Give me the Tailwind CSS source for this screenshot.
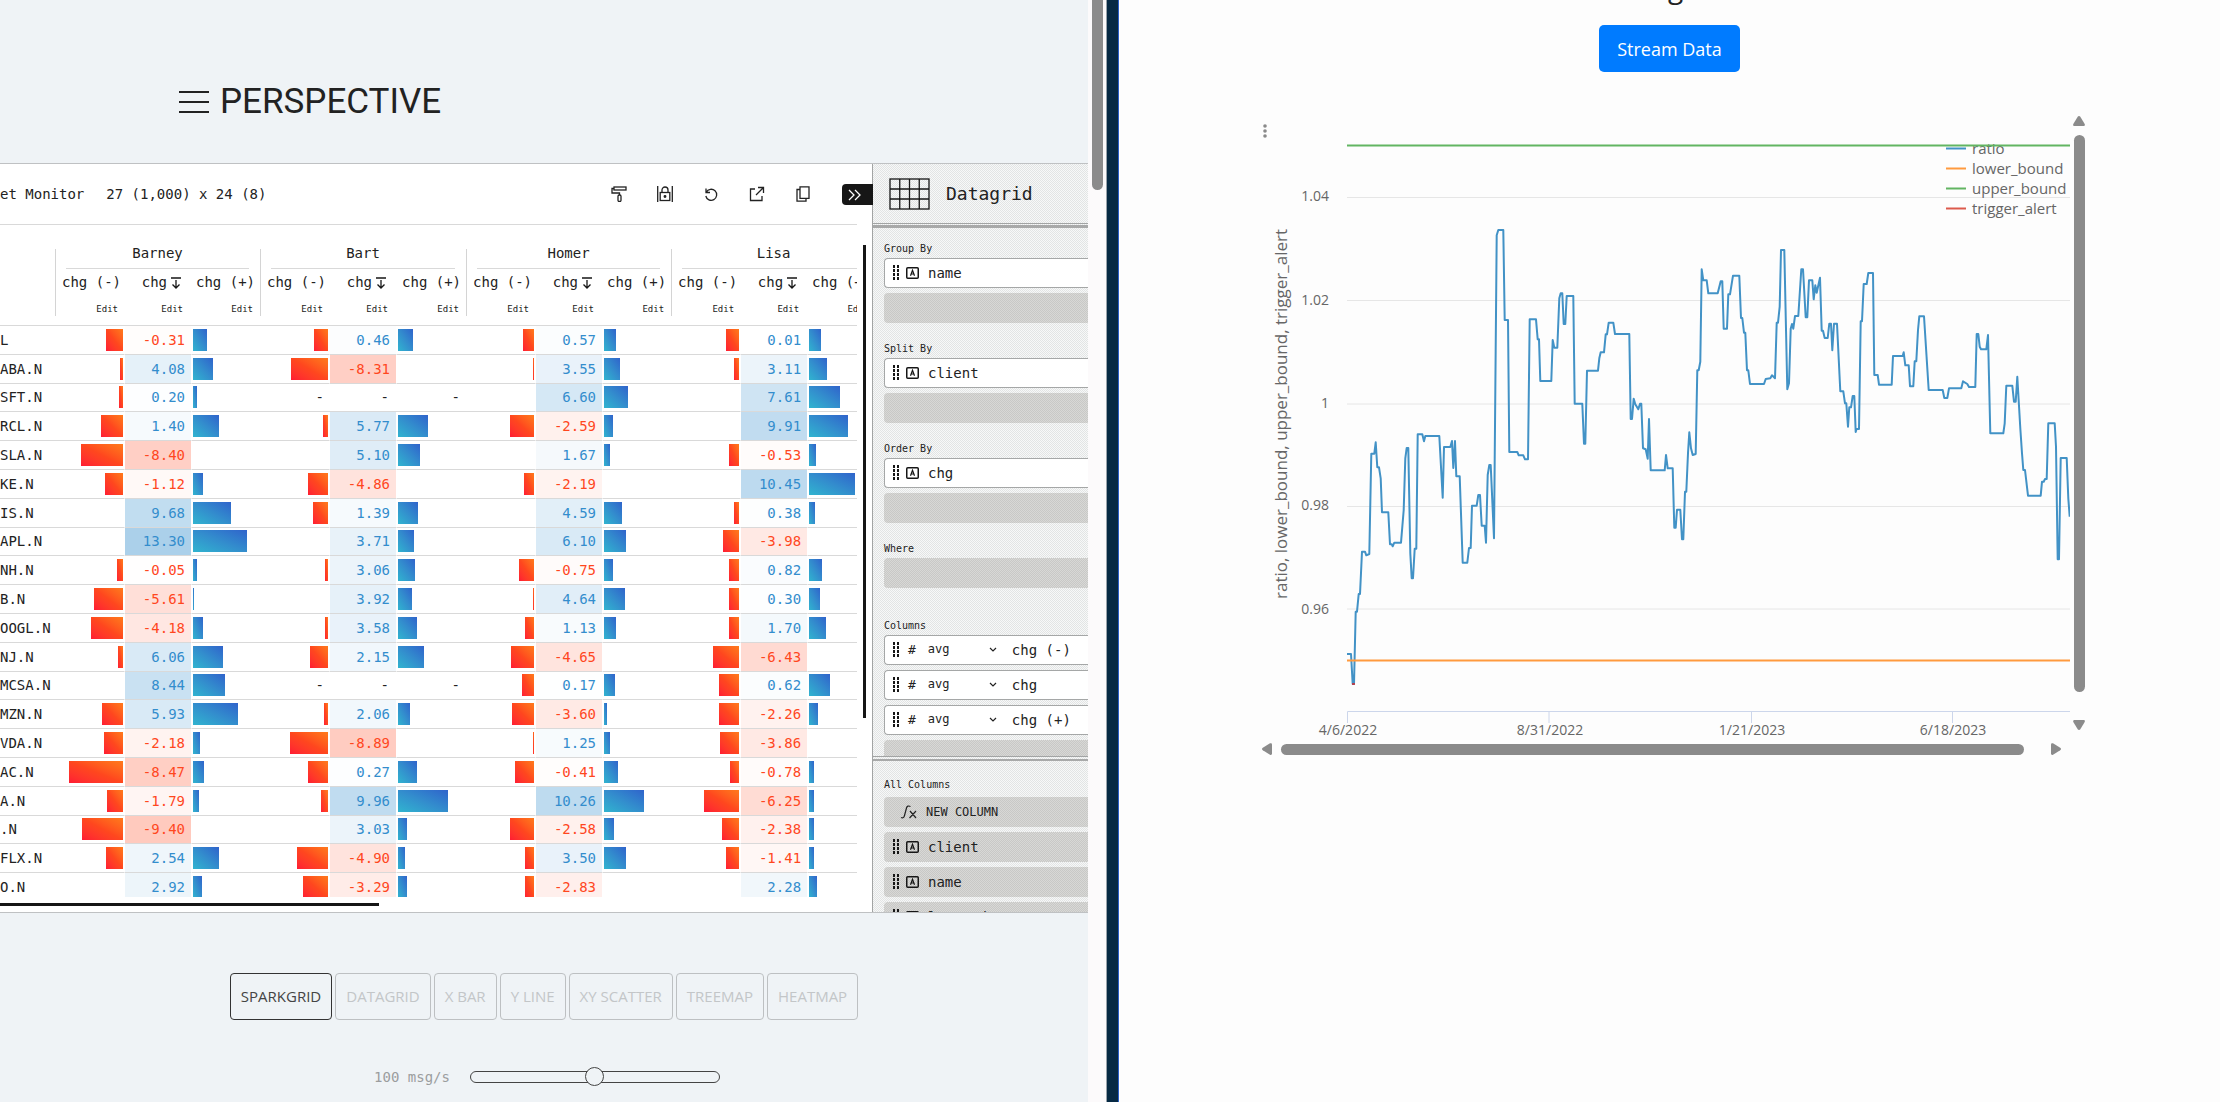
<!DOCTYPE html>
<html lang="en">
<head>
<meta charset="utf-8">
<title>Perspective</title>
<script src="https://cdn.jsdelivr.net/npm/@tailwindcss/browser@4"></script>
</head>
<body class="h-screen overflow-hidden bg-[#fdfdfd]">
<svg class="hidden">
  <symbol id="grip" viewBox="0 0 6 16"><path fill="#161616" d="M0 0h2v3H0zM4 0h2v3H4zM0 4h2v3H0zM4 4h2v3H4zM0 8h2v3H0zM4 8h2v3H4zM0 12h2v3H0zM4 12h2v3H4z"/></symbol>
  <symbol id="str" viewBox="0 0 13 12"><rect x=".75" y=".75" width="11.500" height="10.500" rx="1" fill="none" stroke="#161616" stroke-width="1.500"/><path d="M4.500 8.800 6.500 3.300 8.500 8.800M5.200 7h2.600" fill="none" stroke="#161616" stroke-width="1.200"/></symbol>
</svg>
<div class="grid h-full grid-cols-[1106fr_13px_1101fr]">

  <!-- Perspective demo window -->
  <section class="flex min-w-0 overflow-hidden font-['DejaVu_Sans_Mono',monospace] text-[#222]">
    <div class="flex min-w-0 flex-1 flex-col bg-[#eff3f6]">
      <header class="flex h-[163px] shrink-0 items-center gap-2.5 pt-10 pl-[179px]">
        <button aria-label="Menu" class="mt-px"><svg class="h-6 w-[31px]" viewBox="0 0 31 24"><path d="M0 2h30M0 12h30M0 22h30" stroke="#222" stroke-width="2"/></svg></button>
        <h1 class="font-[Roboto,sans-serif] text-[35px] leading-10 text-[#222]">PERSPECTIVE</h1>
      </header>

      <div class="flex h-[750px] shrink-0 overflow-hidden border-y border-[#bfc1c3] bg-white">
        <div class="flex min-w-0 flex-1 flex-col">
          <div class="relative mr-[15px] flex h-[61px] shrink-0 items-center border-b border-[#d9d9d9] pr-[46px] text-sm">
            <span>et Monitor</span>
            <span class="ml-[22px]">27 (1,000) x 24 (8)</span>
            <div class="ml-auto flex items-center gap-[30px]">
              <button aria-label="Theme"><svg class="size-4" viewBox="0 0 16 16" fill="none" stroke="#222" stroke-width="1.300"><rect x="3" y="1" width="12" height="3"/><path d="M3 2.500H1v4.500h7.500v2"/><rect x="7" y="9" width="3" height="6.500" rx="1.200"/></svg></button>
              <button aria-label="Lock"><svg class="size-4" viewBox="0 0 16 16" fill="none" stroke="#222" stroke-width="1.300"><path d="M.7 0v16M15.300 0v16"/><rect x="3.200" y="6.500" width="9.600" height="8"/><path d="M5 6.500V4a3 3 0 0 1 6 0v2.500"/><circle cx="8" cy="10.500" r=".8" fill="#222"/></svg></button>
              <button aria-label="Reset"><svg class="size-4" viewBox="0 0 16 16" fill="none" stroke="#222" stroke-width="1.300"><path d="M3 2.500v4h4M3.300 6.200A5.500 5.500 0 1 1 2.800 10"/></svg></button>
              <button aria-label="Export"><svg class="size-4" viewBox="0 0 16 16" fill="none" stroke="#222" stroke-width="1.300"><path d="M6 3H1.500v11.500H13V10M9 1.500h5.500V7M14.500 1.500 7 9"/></svg></button>
              <button aria-label="Copy"><svg class="size-4" viewBox="0 0 16 16" fill="none" stroke="#222" stroke-width="1.300"><path d="M5 .8h9v11.500H5zM5 3.500H2v11.700h9v-3"/></svg></button>
            </div>
            <button aria-label="Close settings" class="absolute top-5 -right-4 z-10 flex h-[21px] w-[31px] items-center rounded-l bg-[#161616] pl-1.5"><svg class="h-3 w-[13px]" viewBox="0 0 13 12" fill="none" stroke="#fff" stroke-width="1.300"><path d="m1 1 5 5-5 5M7 1l5 5-5 5"/></svg></button>
          </div>

          <div class="flex min-h-0 flex-1">
            <div class="mb-[15px] min-w-0 flex-1 overflow-hidden pt-[19px]">
              <table class="h-[658px] w-[877px] table-fixed border-separate border-spacing-0 text-sm leading-5">
                <colgroup>
                  <col class="w-14">
                  <col class="w-[68px]"><col class="w-[68px]"><col class="w-[69px]">
                  <col class="w-[68px]"><col class="w-[68px]"><col class="w-[70px]">
                  <col class="w-[68px]"><col class="w-[68px]"><col class="w-[69px]">
                  <col class="w-[68px]"><col class="w-[68px]"><col class="w-[69px]">
                </colgroup>
                <thead id="head"></thead>
                <tbody id="rows"></tbody>
              </table>
            </div>
            <div class="w-[15px] shrink-0 pt-5 pl-1.5"><div class="h-[473px] w-[3px] bg-[#161616]"></div></div>
          </div>
          <div class="-mt-[9px] mb-[6px] h-[3px] w-[379px] shrink-0 bg-[#161616]"></div>
        </div>

        <!-- Settings panel -->
        <aside class="flex w-[216px] shrink-0 flex-col overflow-hidden border-l border-[#a2a4a4] bg-[repeating-conic-gradient(#e2e4e4_0_25%,#f7f8f8_0_50%)] bg-[length:2px_2px]">
          <div class="flex h-[60px] shrink-0 items-center gap-4 border-b border-[#a2a4a4] pl-4">
            <svg class="h-8 w-[41px]" viewBox="0 0 41 32" fill="none" stroke="#161616" stroke-width="1.300"><rect x="1" y="1" width="39" height="30"/><path d="M10.750 1v30M20.500 1v30M30.250 1v30M1 11h39M1 21h39"/></svg>
            <h2 class="text-lg">Datagrid</h2>
          </div>
          <div class="mt-px h-[3px] shrink-0 bg-[#a8a9a9]"></div>
          <div class="flex h-[529px] shrink-0 flex-col overflow-hidden border-b border-[#a2a4a4] pt-[13px] pl-[11px]" id="config"></div>
          <div class="mt-[2px] h-[2px] shrink-0 bg-[#a8a9a9]"></div>
          <div class="flex flex-col gap-[5px] pt-[17px] pl-[11px]">
            <h3 class="text-[10px] leading-[14px]">All Columns</h3>
            <button class="flex h-[30px] shrink-0 items-center gap-2 rounded-l-sm bg-[repeating-conic-gradient(#c8c8c6_0_25%,#d8d8d6_0_50%)] bg-[length:2px_2px] pl-4 text-[12px]"><svg class="h-3.5 w-[18px]" viewBox="0 0 18 14" fill="none" stroke="#222" stroke-width="1.200"><path d="M1 12.500c2 1 3 0 3.500-2L6.500 3c.5-2 2-2.500 4-1.500M10 6l6 7M16 6l-6.500 7"/></svg>NEW COLUMN</button>
            <div id="all" class="flex flex-col gap-[5px]"></div>
          </div>
        </aside>
      </div>

      <nav class="mt-[60px] flex shrink-0 justify-center gap-[3px] font-['Open_Sans',sans-serif] text-[15px] text-[#c3c6c8]">
        <button class="h-[47px] rounded-sm border border-[#333] px-2.5 text-[#444]">SPARKGRID</button>
        <button class="h-[47px] rounded-sm border border-[#bdc0c2] px-2.5">DATAGRID</button>
        <button class="h-[47px] rounded-sm border border-[#bdc0c2] px-2.5">X BAR</button>
        <button class="h-[47px] rounded-sm border border-[#bdc0c2] px-2.5">Y LINE</button>
        <button class="h-[47px] rounded-sm border border-[#bdc0c2] px-2.5">XY SCATTER</button>
        <button class="h-[47px] rounded-sm border border-[#bdc0c2] px-2.5">TREEMAP</button>
        <button class="h-[47px] rounded-sm border border-[#bdc0c2] px-2.5">HEATMAP</button>
      </nav>
      <div class="mt-[47px] flex shrink-0 items-center justify-center gap-5 pl-1.5 text-sm text-[#9b9d9e]">
        <label for="rate">100 msg/s</label>
        <input id="rate" type="range" value="50" class="h-5 w-[250px] appearance-none bg-transparent [&::-webkit-slider-runnable-track]:h-3 [&::-webkit-slider-runnable-track]:rounded-full [&::-webkit-slider-runnable-track]:border [&::-webkit-slider-runnable-track]:border-[#444] [&::-webkit-slider-thumb]:-mt-[5px] [&::-webkit-slider-thumb]:size-[19px] [&::-webkit-slider-thumb]:appearance-none [&::-webkit-slider-thumb]:rounded-full [&::-webkit-slider-thumb]:border [&::-webkit-slider-thumb]:border-[#444] [&::-webkit-slider-thumb]:bg-[#eff3f6]">
      </div>
    </div>
    <div class="w-[18px] shrink-0 bg-[#fcfafb] px-1"><div class="h-[190px] w-[11px] rounded-b-full bg-[#8b8b8b]"></div></div>
  </section>

  <div class="border-r border-l border-r-[#2a5fc8] border-l-[#98a2aa] bg-[#062943]"></div>

  <!-- Streaming chart window -->
  <section class="min-w-0 overflow-hidden font-['Open_Sans',sans-serif]">
    <h2 class="-mt-[31px] mb-5 pl-3 text-center text-[28px] leading-9 text-[#222]">g</h2>
    <div class="flex justify-center">
      <button class="h-[47px] rounded-[5px] bg-[#007bff] px-[18px] text-lg text-white">Stream Data</button>
    </div>
    <div class="relative mx-auto mt-[43px] grid max-w-[831px] grid-cols-[1fr_12px] gap-[3px]">
      <button aria-label="Chart options" class="absolute top-2 left-2"><svg class="h-4 w-1.5" viewBox="0 0 6 16" fill="#8a8a8a"><circle cx="3" cy="3" r="1.800"/><circle cx="3" cy="8" r="1.800"/><circle cx="3" cy="13" r="1.800"/></svg></button>
      <svg class="h-auto w-full" viewBox="1254 115 816 625" fill="none">
        <g stroke="#e6e6e6"><path d="M1347 197.500h723M1347 300.500h723M1347 404h723M1347 506.500h723M1347 609h723"/></g>
        <path d="M1347.500 723v-11.500H2070M1549 711v12M1751.500 711v12M1952.500 711v12" stroke="#ccd6eb"/>
        <g fill="#666" font-size="14" text-anchor="end">
          <text x="1329" y="201">1.04</text><text x="1329" y="305">1.02</text><text x="1329" y="408">1</text><text x="1329" y="510">0.98</text><text x="1329" y="614">0.96</text>
        </g>
        <g fill="#666" font-size="14" text-anchor="middle">
          <text x="1348" y="735">4/6/2022</text><text x="1550" y="735">8/31/2022</text><text x="1752" y="735">1/21/2023</text><text x="1953" y="735">6/18/2023</text>
        </g>
        <text transform="translate(1287 414) rotate(-90)" text-anchor="middle" font-size="17" fill="#666">ratio, lower_bound, upper_bound, trigger_alert</text>
        <polyline stroke="#4292c6" stroke-width="2" stroke-linejoin="round" points="1347,654 1351,654 1352.7,684 1354,684 1355.7,611.7 1357,611.7 1358.7,594 1360,594 1362,551.7 1365,551.7 1366.3,555.3 1369.3,554 1371.3,453.7 1374.3,453.7 1375.7,442.3 1377.3,467.3 1379,467.3 1380.7,478.3 1382,512.3 1388.3,512.3 1390,544.3 1391.7,544.3 1392.7,546.3 1394.3,542.7 1401,542.7 1403.7,510 1405.3,458.3 1406.7,448 1408.3,448 1410.3,553.3 1411.7,578.3 1413,578.3 1414.7,548.7 1416.3,548.7 1417.7,434.3 1422.3,434.3 1424,441.3 1425.3,436 1439.3,436 1442.7,497.7 1444,447 1450.3,447 1452,441 1453.3,468 1455,441 1456.3,476.3 1459.7,476.3 1462.7,562.7 1467.3,562.7 1469,548 1470.7,548 1472,505.7 1476.7,505.7 1478.3,495 1480,495 1481.7,525.7 1484.7,525.7 1486,542.7 1487.7,475 1489.3,465 1490.7,465 1494,538.3 1496.7,235.3 1498.3,230 1503.3,230 1504.7,320 1508,320 1509.3,452 1517.3,452 1518.7,455.3 1523.3,455.3 1525,459.3 1528,459.3 1529.7,319.3 1536,319.3 1537.7,339.3 1539,339.3 1540.3,381 1551.3,381 1552.7,340 1554.3,347.7 1557.3,347.7 1559.3,298.3 1560.7,293.3 1562.3,293.3 1563.7,324 1565.3,324 1566.7,296 1573.3,296 1574.7,403.7 1582.3,403.7 1584,443.7 1585.3,443.7 1587,370.7 1598,370.7 1599.3,358.3 1600.7,352.3 1604,352.3 1605.7,334.3 1607,334.3 1608.7,322.7 1613.3,322.7 1615,334 1629.3,334 1630.7,419 1632,419 1633.7,398.7 1635.3,404.3 1638.3,409.3 1640,403.7 1641.3,403.7 1643,448.3 1645.7,449.3 1647.7,458.7 1649,419 1650.7,470.3 1664.7,470.3 1666,455 1667.7,468.3 1672.7,468.3 1674.3,527.7 1675.7,527.7 1677,509.7 1680.3,509.7 1682,539.3 1683.3,539.3 1685,491.7 1686.3,491.7 1688,453.3 1689.3,432.3 1691,448.3 1692.7,455 1695.7,454 1697.3,370.3 1698.7,370.3 1700.3,361.7 1701.7,269.3 1703.3,280.3 1706.7,280.3 1708.3,293.3 1717.7,293.3 1720.7,281.3 1722.3,281.3 1723.7,328.7 1727,328.7 1728.3,294.3 1730,294.3 1733,275.7 1739.3,275.7 1741,318 1742.3,318 1744,332.7 1745.3,332.7 1747,370.3 1748.3,370.3 1750,384 1764,384 1765.7,379 1770.3,378.3 1772,375.3 1775,378.3 1776.7,322.7 1778,322.7 1779.7,306.7 1781,250 1784.3,250 1787.3,389.3 1789,383.3 1790.7,328.7 1792,324 1793.3,328.7 1795,316 1798.3,316 1801.3,269.3 1803,269.3 1805.7,317.3 1807.3,317.3 1809,280.3 1812.3,280.3 1813.7,299.3 1815.3,285.3 1816.7,292.7 1820,277.7 1821.7,330.7 1823,330.7 1824.7,338 1827.7,338 1829.3,323.7 1831,323.7 1832.3,350.3 1834,323.7 1837,323.7 1840.3,391.3 1843.3,391.3 1845,403.3 1846.3,403.3 1848,426.7 1849.3,407.3 1851,407.3 1852.7,396 1854.3,396 1855.7,432 1856.5,429 1859,429 1860.7,321.3 1862,321.3 1863.7,284 1866.7,284 1868.3,273 1873,273 1874.3,375 1877.7,375 1879,384.7 1891.7,384.7 1893,356 1902.7,356 1903.7,352.3 1905.3,365.3 1908.7,365.3 1910,386.3 1913.3,386.3 1914.7,361.3 1916.3,361.3 1918,330 1919.3,316.3 1924,316.3 1928.7,390 1942.7,390 1944.3,398 1947.3,398 1949,388.3 1961.3,388.3 1963,381.3 1967.3,384 1969,387 1975.3,387 1976.7,334 1978.3,334 1979.7,346.7 1981,349.3 1986.3,349.3 1988,335 1990.3,433.3 2003.3,433.3 2004.7,423.3 2006.3,385.7 2012.3,385.7 2014,401.7 2015.7,401.7 2017.3,376.7 2020.3,428.3 2022,453.3 2023.3,470 2025,470 2028,495.7 2040.7,495.7 2042,481.7 2043.7,481.7 2045,479 2046.7,479 2048.3,423.3 2054.7,423.3 2056,446.7 2057.7,559.3 2059,559.3 2060.7,458 2066.7,458 2068.3,498.3 2069.7,516.7"/>
        <path d="M1352 684h3" stroke="#d62728" stroke-width="1.500"/>
        <path d="M1347 660.500h723" stroke="#ff9a3e" stroke-width="2"/>
        <g font-size="15" fill="#666">
          <text x="1972" y="154">ratio</text><text x="1972" y="174">lower_bound</text><text x="1972" y="194">upper_bound</text><text x="1972" y="214">trigger_alert</text>
        </g>
        <g stroke-width="2"><path d="M1946 148.500h20" stroke="#4292c6"/><path d="M1946 168.500h20" stroke="#ff9a3e"/><path d="M1946 188.500h20" stroke="#62b562"/><path d="M1946 208.500h20" stroke="#dc5a4c"/><path d="M1347 145.500h723" stroke="#62b562"/></g>
      </svg>
      <div class="flex flex-col items-center pt-px pb-2.5">
        <svg class="h-[10px] w-3" viewBox="0 0 12 10" fill="#8b8b8b"><path d="M6 0c.6 0 1 .4 1.300.8L11.700 8c.5 1-.2 2-1 2H1.300c-.9 0-1.500-1-1-2L4.700.8C5 .4 5.400 0 6 0z"/></svg>
        <div class="mt-[9px] mb-7 w-[11px] flex-1 rounded-full bg-[#8b8b8b]"></div>
        <svg class="h-[10px] w-3" viewBox="0 0 12 10" fill="#8b8b8b"><path d="M6 10c-.6 0-1-.4-1.300-.8L.3 2c-.5-1 .2-2 1-2h9.400c.9 0 1.500 1 1 2L7.300 9.200C7 9.600 6.600 10 6 10z"/></svg>
      </div>
      <div class="flex items-center pr-[9px] pl-2">
        <svg class="h-3 w-[10px]" viewBox="0 0 10 12" fill="#8b8b8b"><path d="M0 6c0-.6.400-1 .8-1.300L8 .3c1-.5 2 .2 2 1v9.400c0 .9-1 1.500-2 1L.8 7.300C.4 7 0 6.600 0 6z"/></svg>
        <div class="mr-[27px] ml-[9px] h-[11px] flex-1 rounded-full bg-[#8b8b8b]"></div>
        <svg class="h-3 w-[10px]" viewBox="0 0 10 12" fill="#8b8b8b"><path d="M10 6c0-.6-.4-1-.8-1.300L2 .3C1-.2 0 .5 0 1.300v9.400c0 .9 1 1.500 2 1l7.200-4.400c.4-.3.800-.7.800-1.300z"/></svg>
      </div>
    </div>
  </section>
</div>

<script>
const clients = ['Barney', 'Bart', 'Homer', 'Lisa'];
// Each client: [negative bar px, average change, positive bar px]; null means no trades.
const data = [
  ['L', [17,-0.31,14],[14,0.46,15],[11,0.57,12],[13,0.01,12]],
  ['ABA.N', [3,4.08,20],[37,-8.31,0],[1,3.55,16],[5,3.11,18]],
  ['SFT.N', [4,0.20,4],null,[0,6.60,24],[0,7.61,31]],
  ['RCL.N', [22,1.40,26],[5,5.77,30],[24,-2.59,9],[0,9.91,39]],
  ['SLA.N', [42,-8.40,0],[0,5.10,22],[0,1.67,6],[10,-0.53,7]],
  ['KE.N', [18,-1.12,10],[20,-4.86,0],[10,-2.19,0],[0,10.45,46]],
  ['IS.N', [0,9.68,38],[15,1.39,20],[0,4.59,18],[5,0.38,6]],
  ['APL.N', [0,13.30,54],[0,3.71,16],[0,6.10,22],[16,-3.98,0]],
  ['NH.N', [6,-0.05,4],[3,3.06,17],[15,-0.75,9],[10,0.82,13]],
  ['B.N', [29,-5.61,1],[0,3.92,14],[1,4.64,21],[10,0.30,11]],
  ['OOGL.N', [32,-4.18,10],[3,3.58,19],[9,1.13,12],[10,1.70,17]],
  ['NJ.N', [5,6.06,30],[18,2.15,26],[23,-4.65,0],[26,-6.43,0]],
  ['MCSA.N', [0,8.44,32],null,[12,0.17,11],[20,0.62,21]],
  ['MZN.N', [21,5.93,45],[4,2.06,12],[22,-3.60,3],[20,-2.26,9]],
  ['VDA.N', [19,-2.18,7],[38,-8.89,0],[1,1.25,6],[19,-3.86,0]],
  ['AC.N', [54,-8.47,11],[20,0.27,19],[19,-0.41,14],[9,-0.78,5]],
  ['A.N', [16,-1.79,6],[7,9.96,50],[0,10.26,40],[35,-6.25,5]],
  ['.N', [41,-9.40,0],[0,3.03,9],[24,-2.58,10],[17,-2.38,5]],
  ['FLX.N', [17,2.54,26],[31,-4.90,7],[9,3.50,22],[13,-1.41,5]],
  ['O.N', [0,2.92,9],[25,-3.29,9],[9,-2.83,0],[0,2.28,8]],
];
const sep = "before:absolute before:-left-px before:w-px before:bg-[#d4d4d4] before:content-['']";
const sortIcon = '<svg class="ml-1 inline h-3 w-[10px]" viewBox="0 0 10 12" fill="none" stroke="#161616" stroke-width="1.300"><path d="M0 1h10M5 3v8M1.500 7.500 5 11l3.500-3.500"/></svg>';
document.getElementById('head').innerHTML =
  '<tr class="h-[25px]"><th></th>' + clients.map(c => `<th colspan="3" class="relative px-0 align-top font-normal before:top-[5px] before:bottom-0 ${sep}"><div class="mr-3 ml-[10px] h-[25px] border-b border-[#d9d9d9] pb-1.5 leading-[18px]">${c}</div></th>`).join('') + '</tr>' +
  '<tr class="h-[27px]"><th></th>' + clients.map(() => `<th class="relative pr-[3px] pb-px text-right font-normal whitespace-nowrap before:top-0 before:bottom-0 ${sep}">chg (-)</th><th class="pr-[11px] pb-px text-right font-normal whitespace-nowrap">chg${sortIcon}</th><th class="pr-[6px] pb-px text-right font-normal whitespace-nowrap">chg (+)</th>`).join('') + '</tr>' +
  '<tr class="h-[30px] text-[9px]"><th class="border-b border-[#d9d9d9]"></th>' + clients.map(() => `<th class="relative border-b border-[#d9d9d9] pr-[6px] pb-[3px] text-right font-normal before:top-0 before:bottom-[9px] ${sep}">Edit</th><th class="border-b border-[#d9d9d9] pr-[9px] pb-[3px] text-right font-normal">Edit</th><th class="border-b border-[#d9d9d9] pr-2 pb-[3px] text-right font-normal">Edit</th>`).join('') + '</tr>';

const td = 'border-b border-[#d9d9d9] ';
const cell = g => {
  if (!g) return `<td class="${td} pr-[5px] text-right">-</td><td class="${td} pr-2 text-right">-</td><td class="${td} pr-[7px] text-right">-</td>`;
  const [n, v, p] = g;
  const a = (Math.abs(v) * 0.031).toFixed(3);
  const bg = v < 0 ? `rgba(255,71,30,${a})` : `rgba(51,141,205,${a})`;
  return `<td class="${td} pr-px"><div class="ml-auto h-[22px] bg-linear-to-tr from-[#ff1a33] via-[#ff471e] to-[#ff7a1c]" style="width:${n}px"></div></td>` +
    `<td class="${td} border-x border-x-white bg-clip-padding pr-[6px] text-right ${v < 0 ? 'text-[#ff471e]' : 'text-[#338dcd]'}" style="background-color:${bg}">${v.toFixed(2)}</td>` +
    `<td class="${td} pl-px"><div class="h-[22px] bg-linear-to-tr from-[#31b4cf] via-[#338dcd] to-[#3063cb]" style="width:${p}px"></div></td>`;
};
document.getElementById('rows').innerHTML = data.map(([name, ...gs]) =>
  `<tr class="h-7"><th class="${td} text-left font-normal whitespace-nowrap">${name}</th>${gs.map(cell).join('')}</tr>`).join('');

const grip = '<svg class="h-4 w-1.5 shrink-0"><use href="#grip"/></svg>';
const str = '<svg class="ml-[7px] h-3 w-[13px] shrink-0"><use href="#str"/></svg>';
const box = 'mb-[5px] flex h-[30px] shrink-0 items-center rounded-l-sm border border-r-0 border-[#a5a7a7] bg-white pl-2 text-sm';
const slot = '<div class="h-[30px] shrink-0 rounded-l-sm bg-[repeating-conic-gradient(#c8c8c6_0_25%,#d8d8d6_0_50%)] bg-[length:2px_2px]"></div>';
const label = t => `<h3 class="mb-px text-[10px] leading-4">${t}</h3>`;
const section = (t, f) => `<div class="mb-[18px] flex flex-col">${label(t)}${f ? `<div class="${box}">${grip}${str}<span class="ml-[9px]">${f}</span></div>` : ''}${slot}</div>`;
const column = n => `<div class="${box}">${grip}<span class="ml-[9px] text-[13px]">#</span><select aria-label="Aggregate for ${n}" class="ml-3 w-[55px] appearance-none bg-transparent text-[12px]"><option>avg</option></select><svg class="ml-1.5 h-1.5 w-2 shrink-0" viewBox="0 0 8 6" fill="none" stroke="#222" stroke-width="1.200"><path d="m1 1 3 3 3-3"/></svg><span class="ml-[15px] whitespace-nowrap">${n}</span></div>`;
document.getElementById('config').innerHTML =
  section('Group By', 'name') + section('Split By', 'client') + section('Order By', 'chg') + section('Where') +
  `<div class="mt-3 flex flex-col">${label('Columns')}${['chg (-)', 'chg', 'chg (+)'].map(column).join('')}${slot}</div>`;
document.getElementById('all').innerHTML = ['client', 'name', 'lastUpdate'].map(n =>
  `<div class="flex h-[30px] shrink-0 items-center rounded-l-sm bg-[repeating-conic-gradient(#c8c8c6_0_25%,#d8d8d6_0_50%)] bg-[length:2px_2px] pl-[9px] text-sm">${grip}${str}<span class="ml-[9px]">${n}</span></div>`).join('');
</script>
</body>
</html>
